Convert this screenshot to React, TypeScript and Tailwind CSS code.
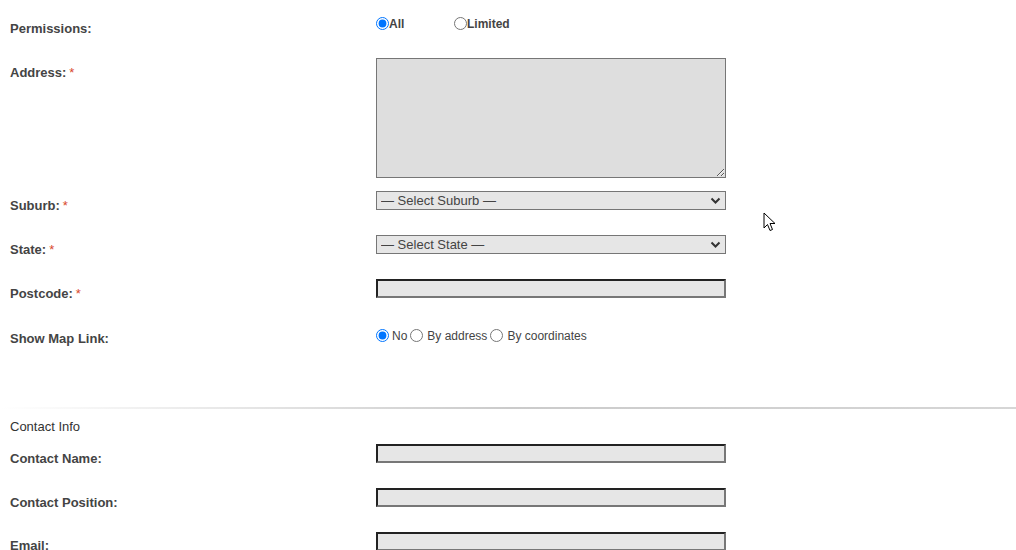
import React from 'react';

const font = { fontFamily: '"Liberation Sans", Arial, sans-serif' };

function Req() {
  return <span className="text-[#d9482b] font-normal ml-[3px]">*</span>;
}

function Label({ text, required }: { text: string; required?: boolean }) {
  return (
    <div className="w-[366px] shrink-0 pt-[7px] text-[13px] leading-[15px] font-bold text-[#444]">
      {text}
      {required && <Req />}
    </div>
  );
}

function Row({ h, children }: { h: string; children: React.ReactNode }) {
  return <div className={`flex items-start ${h}`}>{children}</div>;
}

function SelectBox({ placeholder }: { placeholder: string }) {
  return (
    <div className="relative w-[350px] h-[19px]">
      <select
        className="block appearance-none w-full h-full bg-[#e6e6e6] border border-[#767676] pl-[4px] text-[13px] leading-[17px] text-[#444] outline-none"
        defaultValue=""
        style={font}
      >
        <option value="">{placeholder}</option>
      </select>
      <svg className="absolute right-[5px] top-[6px] pointer-events-none" width="11" height="8" viewBox="0 0 11 8">
        <path d="M1.5 1.5 L5.5 5.5 L9.5 1.5" fill="none" stroke="#333" strokeWidth="2" />
      </svg>
    </div>
  );
}

function TextInput() {
  return (
    <input
      type="text"
      className="block w-[350px] h-[19px] bg-[#e6e6e6] border-2 border-t-[#222] border-l-[#222] border-b-[#777] border-r-[#777] outline-none"
    />
  );
}

export default function App() {
  return (
    <div className="relative w-[1016px] h-[550px] overflow-hidden bg-white" style={font}>
      <div className="pl-[10px] pt-[15px]">
        <Row h="h-[43px]">
          <div className="w-[366px] shrink-0 pt-[6px] text-[13px] leading-[15px] font-bold text-[#444]">Permissions:</div>
          <div className="mt-[2px] flex items-center h-[13px] text-[12px] font-bold text-[#444]">
            <label className="flex items-center w-[78px]">
              <input type="radio" name="perm" defaultChecked className="m-0 w-[13px] h-[13px]" />
              <span>All</span>
            </label>
            <label className="flex items-center">
              <input type="radio" name="perm" className="m-0 w-[13px] h-[13px]" />
              <span>Limited</span>
            </label>
          </div>
        </Row>

        <Row h="h-[133px]">
          <Label text="Address:" required />
          <textarea className="block w-[350px] h-[120px] bg-[#dedede] border border-[#767676] outline-none" />
        </Row>

        <Row h="h-[44px]">
          <Label text="Suburb:" required />
          <SelectBox placeholder="— Select Suburb —" />
        </Row>

        <Row h="h-[44px]">
          <Label text="State:" required />
          <SelectBox placeholder="— Select State —" />
        </Row>

        <Row h="h-[45px]">
          <Label text="Postcode:" required />
          <TextInput />
        </Row>

        <Row h="h-[83px]">
          <Label text="Show Map Link:" />
          <div className="mt-[5px] flex items-center h-[13px] text-[12px] text-[#444]">
            <input type="radio" name="map" defaultChecked className="m-0 w-[13px] h-[13px]" />
            <span className="ml-[3px] mr-[3px]">No</span>
            <input type="radio" name="map" className="m-0 w-[13px] h-[13px]" />
            <span className="ml-[4px] mr-[3px]">By address</span>
            <input type="radio" name="map" className="m-0 w-[13px] h-[13px]" />
            <span className="ml-[4px]">By coordinates</span>
          </div>
        </Row>
      </div>

      <div className="h-[2px] w-full bg-linear-to-r from-white via-[#cbcbcb] to-[#d6d6d6]" />

      <div className="pl-[10px]">
        <div className="pt-[10px] h-[35px] text-[13px] leading-[15px] text-[#333]">Contact Info</div>

        <Row h="h-[44px]">
          <div className="w-[366px] shrink-0 pt-[7px] text-[13px] leading-[15px] font-bold text-[#444]">Contact Name:</div>
          <TextInput />
        </Row>
        <Row h="h-[44px]">
          <div className="w-[366px] shrink-0 pt-[7px] text-[13px] leading-[15px] font-bold text-[#444]">Contact Position:</div>
          <TextInput />
        </Row>
        <Row h="h-[44px]">
          <div className="w-[366px] shrink-0 pt-[6px] text-[13px] leading-[15px] font-bold text-[#444]">Email:</div>
          <TextInput />
        </Row>
      </div>

      {/* mouse pointer */}
      <svg className="absolute left-[763px] top-[212px]" width="14" height="21" viewBox="0 0 14 21">
        <path d="M1 1 L1 16 L4.5 12.5 L7 18.5 L9.5 17.5 L7 11.5 L12 11.5 Z" fill="#fff" stroke="#000" strokeWidth="1" />
      </svg>
    </div>
  );
}
